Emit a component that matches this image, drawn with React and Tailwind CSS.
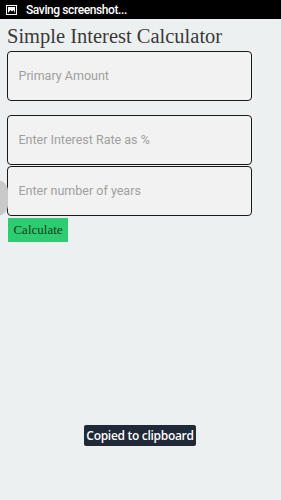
import React from "react";

const Field = ({ placeholder, className = "" }) => (
  <div
    className={`h-[50px] w-[245px] rounded-[4px] border-[1.5px] border-[#1a1a1a] bg-[#f2f2f2] flex items-center pl-[10.5px] ${className}`}
  >
    <span className="text-[12.5px] text-[#a0a0a0] font-['Roboto',sans-serif]">{placeholder}</span>
  </div>
);

export default function App() {
  return (
    <div className="relative w-[281px] h-[500px] bg-[#edf0f0] overflow-hidden">
      {/* status bar */}
      <div className="h-[19px] bg-black flex items-center pl-[6px] gap-[9px]">
        <svg width="11" height="10" viewBox="0 0 11 10">
          <rect x="0.5" y="0.5" width="10" height="9" fill="none" stroke="#fff" strokeWidth="1" />
          <rect x="2" y="2" width="7" height="6" fill="#fff" />
          <path d="M2 8 L4.5 5 L6 6.5 L7.5 5 L9 8 Z" fill="#000" />
        </svg>
        <span className="text-white text-[12px] font-medium font-['Roboto',sans-serif] tracking-[-0.4px]">
          Saving screenshot...
        </span>
      </div>

      <div className="pl-[7px] pt-[4px]">
        <h1 className="text-[20.5px] leading-[26px] text-[#3a3a3a] font-['Liberation_Serif',serif]">
          Simple Interest Calculator
        </h1>
        <Field placeholder="Primary Amount" className="mt-[2px]" />
        <Field placeholder="Enter Interest Rate as %" className="mt-[14px]" />
        <Field placeholder="Enter number of years" className="mt-px" />
        <button className="mt-[2px] ml-px h-[24px] w-[60px] bg-[#2ecc71] text-[13px] text-[#143d20] font-['Liberation_Serif',serif]">
          Calculate
        </button>
      </div>

      {/* edge handle */}
      <div className="absolute left-[-14px] top-[180px] w-[22px] h-[36px] rounded-full bg-[#c9c9c9]" />

      {/* toast */}
      <div className="absolute left-[84px] top-[425px] w-[112px] h-[21px] rounded-[2px] bg-[#1f2937] flex items-center justify-center">
        <span className="text-white text-[12px] font-semibold font-['Open_Sans',sans-serif] tracking-[-0.3px]">
          Copied to clipboard
        </span>
      </div>
    </div>
  );
}
